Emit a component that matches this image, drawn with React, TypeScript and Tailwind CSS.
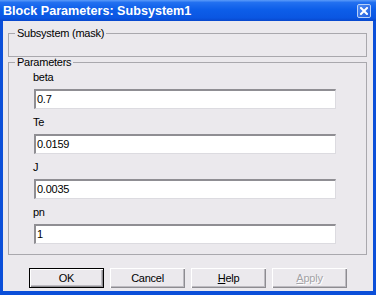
import React from "react";

const fields = [
  { label: "beta", value: "0.7" },
  { label: "Te", value: "0.0159" },
  { label: "J", value: "0.0035" },
  { label: "pn", value: "1" },
];

const raised =
  "shadow-[inset_1px_1px_0_#ffffff,inset_-1px_-1px_0_#8d8c91,inset_-2px_-2px_0_#bdbbc1]";

function DialogButton({
  children,
  isDefault,
  disabled,
}: {
  children: React.ReactNode;
  isDefault?: boolean;
  disabled?: boolean;
}) {
  return (
    <button
      type="button"
      className={
        "flex h-[20px] w-[75px] items-center justify-center bg-[#ebe9ed] text-[11px] leading-[13px] " +
        (isDefault ? "border border-black " : "") +
        (disabled ? "text-[#a3a2a6] [text-shadow:1px_1px_0_#ffffff] " : "text-black ") +
        raised
      }
    >
      {children}
    </button>
  );
}

export default function App() {
  return (
    <div className="flex h-[295px] w-[376px] flex-col overflow-hidden font-['Liberation_Sans',Arial,sans-serif] text-black">
      {/* title bar */}
      <div className="flex h-[21px] shrink-0 items-center justify-between bg-[linear-gradient(to_bottom,#5b9bf9_0%,#2270f0_12%,#0d5ee9_45%,#0a56e2_85%,#0847cc_100%)] pl-[3px] pr-[5px]">
        <span className="text-[12.6px] font-bold leading-[14px] text-white">
          Block Parameters: Subsystem1
        </span>
        <div className="flex h-[14px] w-[14px] items-center justify-center rounded-[2px] border border-[#b9d0f7] bg-[linear-gradient(135deg,#4f8cf3,#215fe0)]">
          <svg width="8" height="8" viewBox="0 0 8 8">
            <path d="M1 1 L7 7 M7 1 L1 7" stroke="#ffffff" strokeWidth="2" strokeLinecap="square" />
          </svg>
        </div>
      </div>

      {/* window body */}
      <div className="flex flex-1 flex-col border-x-[3px] border-b-[4px] border-[#0b4fd9] bg-[#ebe9ed] text-[11px] tracking-[-0.25px]">
        <fieldset className="ml-[5px] mt-[7px] h-[29px] w-[359px] border border-[#a9a8ad] px-[6px]">
          <legend className="px-[2px] leading-[11px]">Subsystem (mask)</legend>
        </fieldset>

        <fieldset className="ml-[5px] h-[198px] w-[359px] border border-[#a9a8ad] pl-[24px] pr-[6px] pt-[3px]">
          <legend className="ml-[-18px] px-[2px] leading-[11px]">Parameters</legend>
          {fields.map((field) => (
            <div key={field.label} className="mb-[7px] flex flex-col">
              <span className="leading-[13px]">{field.label}</span>
              <div className="ml-[1px] mt-[5px] flex h-[20px] w-[302px] items-center border-b border-r border-[#dcdbe0] border-l-2 border-t-2 border-l-[#8f8e93] border-t-[#8f8e93] bg-white pl-[1px]">
                <span className="leading-[13px]">{field.value}</span>
              </div>
            </div>
          ))}
        </fieldset>

        <div className="ml-[26px] mt-[13px] flex gap-[6px]">
          <DialogButton isDefault>OK</DialogButton>
          <DialogButton>Cancel</DialogButton>
          <DialogButton>
            <span>
              <span className="underline">H</span>elp
            </span>
          </DialogButton>
          <DialogButton disabled>
            <span>
              <span className="underline">A</span>pply
            </span>
          </DialogButton>
        </div>
      </div>
    </div>
  );
}
